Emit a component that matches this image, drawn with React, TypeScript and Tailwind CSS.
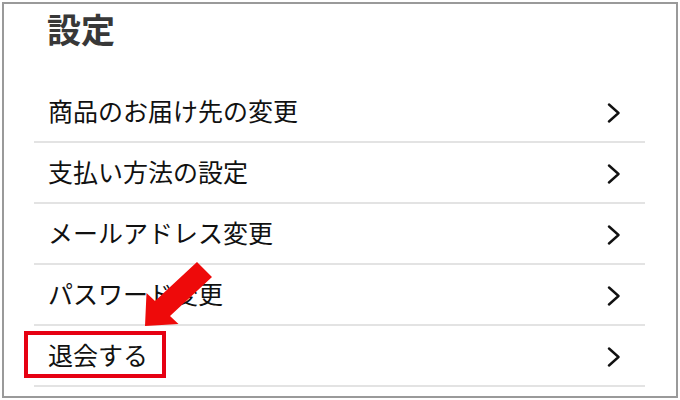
import React from "react";

const rows = [
  "商品のお届け先の変更",
  "支払い方法の設定",
  "メールアドレス変更",
  "パスワード変更",
  "退会する",
];

function Chevron() {
  return (
    <svg width="14" height="20" viewBox="0 0 14 20" className="shrink-0 mt-[4px]">
      <polyline
        points="2,1.5 11.5,10 2,18.5"
        fill="none"
        stroke="#111"
        strokeWidth="2.4"
        strokeLinecap="round"
        strokeLinejoin="round"
      />
    </svg>
  );
}

export default function App() {
  return (
    <div
      className="w-[680px] h-[400px] bg-white p-[2px] relative overflow-hidden"
      style={{ fontFamily: '"Noto Sans CJK JP", "Noto Sans", sans-serif' }}
    >
      <div className="w-full h-full border-2 border-[#9a9a9a] pl-[30px] pr-[31px] flex flex-col">
        <div className="h-[78px] pl-[13px] pt-[5px]">
          <div className="text-[34px] leading-[40px] font-semibold text-[#383838]">設定</div>
        </div>
        {rows.map((r, i) => (
          <div
            key={i}
            className="h-[61px] flex items-center justify-between pl-[14px] pr-[24px] pb-[2px] border-b-2 border-[#e3e3e3]"
          >
            <span className="text-[25px] leading-none text-[#111] whitespace-nowrap">{r}</span>
            <Chevron />
          </div>
        ))}
      </div>
      <div className="absolute left-[24px] top-[331px] w-[142px] h-[47px] border-4 border-[#e60012]" />
      <svg
        className="absolute left-0 top-0"
        width="680"
        height="400"
        viewBox="0 0 680 400"
      >
        <polygon
          points="145,326 146.5,293 155,301 197,262 212,277 170,316 178.5,324"
          fill="#ee0a0a"
        />
      </svg>
    </div>
  );
}
